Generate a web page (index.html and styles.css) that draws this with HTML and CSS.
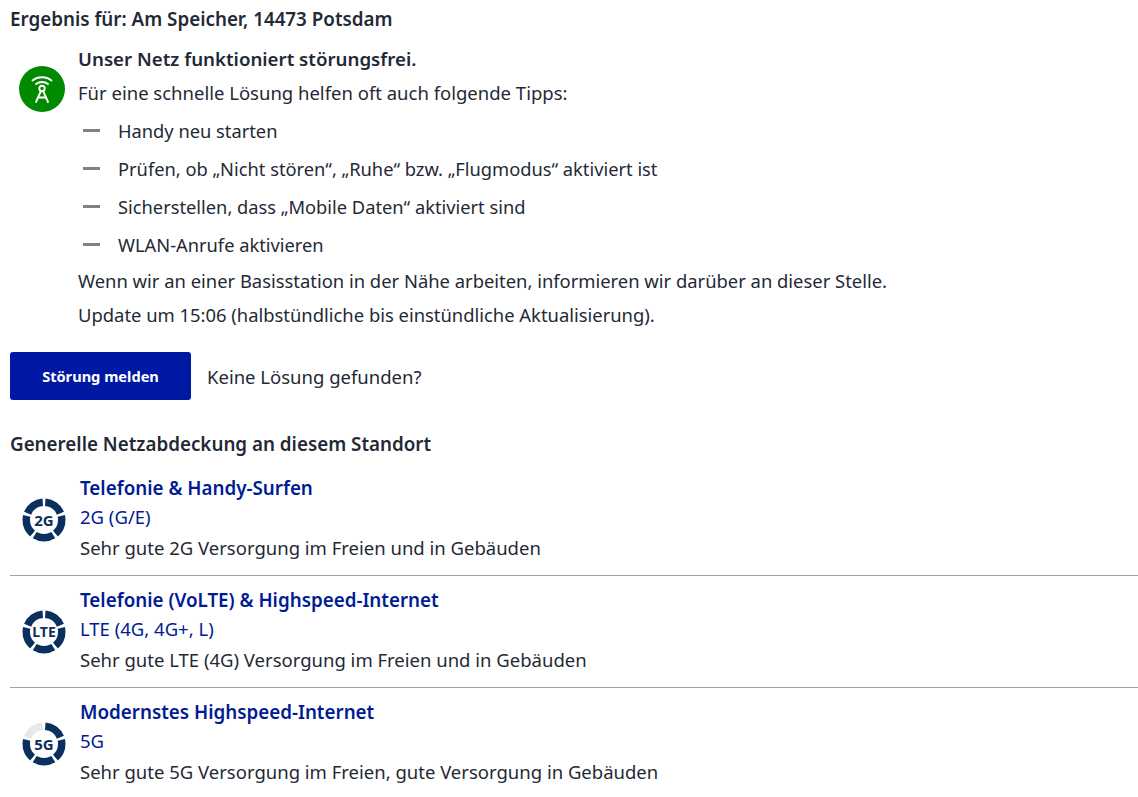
FILE: index.html
```html
<!DOCTYPE html>
<html>
<head>
    <title>Netzstatus</title>
    <link rel="stylesheet" href="styles.css">
</head>
<body>
    <h2 class="heading">Ergebnis für: Am Speicher, 14473 Potsdam</h2>

    <div class="status">
        <div class="status-icon">
            <svg width="36" height="36" viewBox="0 0 36 36" fill="none" stroke="#fff" stroke-width="1.9" stroke-linecap="round" stroke-linejoin="round">
                <path d="M8.500 9.500c5.200-4.300 13.800-4.300 19 0"/>
                <path d="M12 13c3.300-2.600 8.700-2.600 12 0"/>
                <circle cx="18" cy="17.500" r="2.700"/>
                <path d="M16.700 20.300 12 31M19.300 20.300 24 31M14.500 26.500h7"/>
            </svg>
        </div>
        <div class="status-text">
            <p class="status-title">Unser Netz funktioniert störungsfrei.</p>
            <p class="tip-intro">Für eine schnelle Lösung helfen oft auch folgende Tipps:</p>
            <ul class="tips">
                <li>Handy neu starten</li>
                <li>Prüfen, ob „Nicht stören“, „Ruhe“ bzw. „Flugmodus“ aktiviert ist</li>
                <li>Sicherstellen, dass „Mobile Daten“ aktiviert sind</li>
                <li>WLAN-Anrufe aktivieren</li>
            </ul>
            <p class="note">Wenn wir an einer Basisstation in der Nähe arbeiten, informieren wir darüber an dieser Stelle.</p>
            <p class="note">Update um 15:06 (halbstündliche bis einstündliche Aktualisierung).</p>
        </div>
    </div>

    <div class="report">
        <button class="report-btn">Störung melden</button>
        <span>Keine Lösung gefunden?</span>
    </div>

    <h2 class="heading coverage-heading">Generelle Netzabdeckung an diesem Standort</h2>

    <div class="coverage">
        <div class="coverage-row">
            <div class="ring">
                <svg width="44" height="44" viewBox="0 0 44 44" fill="none">
                    <circle class="ring-dark" cx="22" cy="22" r="17.750" pathLength="100" stroke-dasharray="17.600 2.400" stroke-dashoffset="-1.200"/>
                </svg>
                <span>2G</span>
            </div>
            <div>
                <div class="service">Telefonie &amp; Handy-Surfen</div>
                <div class="tech">2G (G/E)</div>
                <div class="quality">Sehr gute 2G Versorgung im Freien und in Gebäuden</div>
            </div>
        </div>
        <div class="coverage-row">
            <div class="ring">
                <svg width="44" height="44" viewBox="0 0 44 44" fill="none">
                    <circle class="ring-dark" cx="22" cy="22" r="17.750" pathLength="100" stroke-dasharray="17.600 2.400" stroke-dashoffset="-1.200"/>
                </svg>
                <span class="ring-long">LTE</span>
            </div>
            <div>
                <div class="service">Telefonie (VoLTE) &amp; Highspeed-Internet</div>
                <div class="tech">LTE (4G, 4G+, L)</div>
                <div class="quality">Sehr gute LTE (4G) Versorgung im Freien und in Gebäuden</div>
            </div>
        </div>
        <div class="coverage-row">
            <div class="ring">
                <svg width="44" height="44" viewBox="0 0 44 44" fill="none">
                    <circle class="ring-light" cx="22" cy="22" r="17.750" pathLength="100" stroke-dasharray="17.600 82.400" stroke-dashoffset="18.800"/>
                    <circle class="ring-dark" cx="22" cy="22" r="17.750" pathLength="100" stroke-dasharray="17.600 2.400 17.600 2.400 17.600 2.400 17.600 22.400" stroke-dashoffset="-1.200"/>
                </svg>
                <span>5G</span>
            </div>
            <div>
                <div class="service">Modernstes Highspeed-Internet</div>
                <div class="tech">5G</div>
                <div class="quality">Sehr gute 5G Versorgung im Freien, gute Versorgung in Gebäuden</div>
            </div>
        </div>
    </div>
</body>
</html>
```

FILE: styles.css
```css
body {
    font-family: "Noto Sans", sans-serif;
    font-size: 18.5px;
    color: #1f2a36;
    margin: 0;
    padding: 7px 0 0 10px;
    background-color: #fff;
}
p {
    margin: 0;
}
.heading {
    font-size: 18.8px;
    font-weight: 600;
    line-height: 24px;
    margin: 0;
}
.status {
    display: flex;
    margin-top: 16px;
}
.status-icon {
    width: 46px;
    height: 46px;
    margin: 19px 13px 0 9px;
    border-radius: 50%;
    background-color: #008a00;
    display: flex;
    align-items: center;
    justify-content: center;
}
.status-text {
    flex: 1;
}
.status-title {
    font-size: 18.7px;
    font-weight: 600;
    line-height: 24px;
}
.tip-intro {
    line-height: 24px;
    margin-top: 10px;
}
.tips {
    list-style: none;
    margin: 0;
    padding: 0;
    font-size: 18.3px;
}
.tips li {
    line-height: 24px;
    margin-top: 14px;
    padding-left: 40px;
    position: relative;
}
.tips li::before {
    content: "";
    position: absolute;
    left: 5px;
    top: 10px;
    width: 17px;
    height: 3px;
    background-color: #7c8287;
}
.note {
    font-size: 18.4px;
    line-height: 24px;
    margin-top: 10px;
}
.tips + .note {
    margin-top: 12px;
}
.report {
    display: flex;
    align-items: center;
    gap: 16px;
    margin-top: 25px;
}
.report-btn {
    width: 181px;
    height: 48px;
    background-color: #0019a5;
    color: white;
    border: none;
    border-radius: 3px;
    font-family: inherit;
    font-size: 14.6px;
    font-weight: 700;
    cursor: pointer;
}
.coverage-heading {
    margin-top: 32px;
}
.coverage {
    margin-top: 8px;
}
.coverage-row {
    display: flex;
    align-items: center;
    padding: 12px 0 15px;
    border-bottom: 1px solid #a3a3a3;
}
.coverage-row:last-child {
    border-bottom: none;
}
.ring {
    position: relative;
    width: 44px;
    height: 44px;
    margin: 3px 14px 0 12px;
    display: flex;
    align-items: center;
    justify-content: center;
}
.ring svg {
    position: absolute;
    left: 0;
    top: 0;
    transform: rotate(-90deg);
}
.ring span {
    font-size: 15px;
    font-weight: 700;
    color: #0b2f5f;
}
.ring .ring-long {
    font-size: 14px;
}
.ring-dark {
    stroke: #0b2f5f;
    stroke-width: 7.5;
}
.ring-light {
    stroke: #e6e8ea;
    stroke-width: 7.5;
}
.service {
    font-size: 18.8px;
    font-weight: 600;
    color: #001b94;
    line-height: 24px;
}
.tech {
    color: #001b94;
    line-height: 24px;
    margin-top: 5px;
}
.quality {
    line-height: 24px;
    margin-top: 7px;
}
```
